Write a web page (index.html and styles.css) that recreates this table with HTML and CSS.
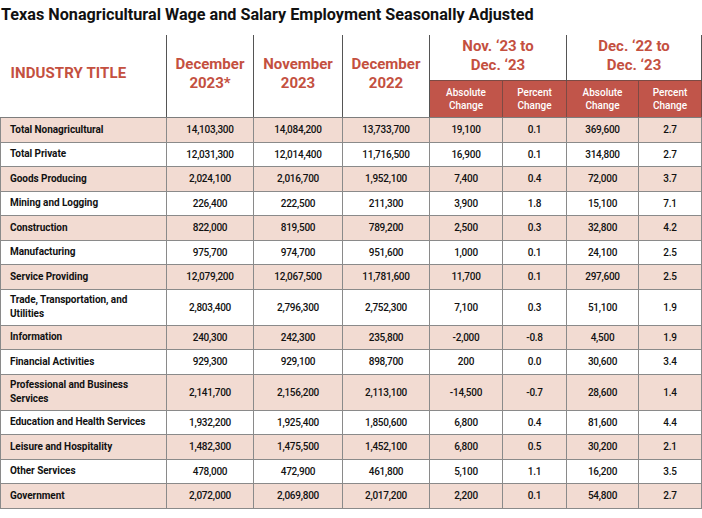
FILE: index.html
```html
<!DOCTYPE html>
<html>
<head>
<meta charset="utf-8">
<link rel="stylesheet" href="styles.css">
</head>
<body>
<h1 class="title">Texas Nonagricultural Wage and Salary Employment Seasonally Adjusted</h1>
<table class="emp">
<colgroup>
<col class="c-ind"><col class="c-a"><col class="c-b"><col class="c-c"><col class="c-d"><col class="c-e"><col class="c-f"><col class="c-g">
</colgroup>
<thead>
<tr class="top">
<th rowspan="2" class="ind">INDUSTRY TITLE</th>
<th rowspan="2" class="per">December<br>2023*</th>
<th rowspan="2" class="per">November<br>2023</th>
<th rowspan="2" class="per">December<br>2022</th>
<th colspan="2" class="grp">Nov. ‘23 to<br>Dec. ‘23</th>
<th colspan="2" class="grp">Dec. ‘22 to<br>Dec. ‘23</th>
</tr>
<tr class="sub">
<th>Absolute<br>Change</th><th>Percent<br>Change</th><th>Absolute<br>Change</th><th>Percent<br>Change</th>
</tr>
</thead>
<tbody>
<tr class="odd"><td>Total Nonagricultural</td><td>14,103,300</td><td>14,084,200</td><td>13,733,700</td><td>19,100</td><td>0.1</td><td>369,600</td><td>2.7</td></tr>
<tr><td>Total Private</td><td>12,031,300</td><td>12,014,400</td><td>11,716,500</td><td>16,900</td><td>0.1</td><td>314,800</td><td>2.7</td></tr>
<tr class="odd"><td>Goods Producing</td><td>2,024,100</td><td>2,016,700</td><td>1,952,100</td><td>7,400</td><td>0.4</td><td>72,000</td><td>3.7</td></tr>
<tr><td>Mining and Logging</td><td>226,400</td><td>222,500</td><td>211,300</td><td>3,900</td><td>1.8</td><td>15,100</td><td>7.1</td></tr>
<tr class="odd"><td>Construction</td><td>822,000</td><td>819,500</td><td>789,200</td><td>2,500</td><td>0.3</td><td>32,800</td><td>4.2</td></tr>
<tr><td>Manufacturing</td><td>975,700</td><td>974,700</td><td>951,600</td><td>1,000</td><td>0.1</td><td>24,100</td><td>2.5</td></tr>
<tr class="odd"><td>Service Providing</td><td>12,079,200</td><td>12,067,500</td><td>11,781,600</td><td>11,700</td><td>0.1</td><td>297,600</td><td>2.5</td></tr>
<tr class="tall"><td>Trade, Transportation, and<br>Utilities</td><td>2,803,400</td><td>2,796,300</td><td>2,752,300</td><td>7,100</td><td>0.3</td><td>51,100</td><td>1.9</td></tr>
<tr class="odd"><td>Information</td><td>240,300</td><td>242,300</td><td>235,800</td><td>-2,000</td><td>-0.8</td><td>4,500</td><td>1.9</td></tr>
<tr><td>Financial Activities</td><td>929,300</td><td>929,100</td><td>898,700</td><td>200</td><td>0.0</td><td>30,600</td><td>3.4</td></tr>
<tr class="odd tall"><td>Professional and Business<br>Services</td><td>2,141,700</td><td>2,156,200</td><td>2,113,100</td><td>-14,500</td><td>-0.7</td><td>28,600</td><td>1.4</td></tr>
<tr><td>Education and Health Services</td><td>1,932,200</td><td>1,925,400</td><td>1,850,600</td><td>6,800</td><td>0.4</td><td>81,600</td><td>4.4</td></tr>
<tr class="odd"><td>Leisure and Hospitality</td><td>1,482,300</td><td>1,475,500</td><td>1,452,100</td><td>6,800</td><td>0.5</td><td>30,200</td><td>2.1</td></tr>
<tr><td>Other Services</td><td>478,000</td><td>472,900</td><td>461,800</td><td>5,100</td><td>1.1</td><td>16,200</td><td>3.5</td></tr>
<tr class="odd"><td>Government</td><td>2,072,000</td><td>2,069,800</td><td>2,017,200</td><td>2,200</td><td>0.1</td><td>54,800</td><td>2.7</td></tr>
</tbody>
</table>
</body>
</html>
```

FILE: styles.css
```css
html, body {
  margin: 0;
  padding: 0;
  background: #ffffff;
}
body {
  font-family: Roboto, "Liberation Sans", sans-serif;
  color: #111111;
}
.title {
  margin: 0;
  padding: 5px 0 0 1px;
  height: 30px;
  box-sizing: border-box;
  font-size: 16.2px;
  font-weight: 700;
  letter-spacing: 0;
  line-height: 19px;
  color: #111111;
  white-space: nowrap;
}
.emp {
  border-collapse: collapse;
  table-layout: fixed;
  width: 701px;
  margin-top: 5px;
}
.c-ind { width: 166px; }
.c-a { width: 87px; }
.c-b { width: 89px; }
.c-c { width: 87px; }
.c-d { width: 73px; }
.c-e { width: 64px; }
.c-f { width: 72px; }
.c-g { width: 63px; }

.emp th {
  padding: 0;
  font-weight: 700;
  color: #c4503f;
  text-align: center;
}
.top th {
  height: 42px;
  border-left: 1px solid #555555;
  border-right: 1px solid #555555;
  border-bottom: 1px solid #7d7d7d;
  font-size: 15px;
  line-height: 19px;
}
.top th.ind {
  border-left: none;
  text-align: left;
  padding-left: 10px;
  padding-bottom: 5px;
  font-size: 15px;
  letter-spacing: 0.1px;
}
.top th.per {
  padding-bottom: 4px;
}
.top th.grp {
  border-bottom: none;
  padding-bottom: 3px;
}
.sub th {
  height: 36px;
  background: #c1554a;
  color: #ffffff;
  font-size: 10px;
  font-weight: 500;
  line-height: 13px;
  border: 1px solid #7d4a44;
  border-bottom: 1px solid #7d7d7d;
}
.emp td {
  height: 23.5px;
  padding: 0;
  border: 1px solid #8a8a8a;
  font-size: 10px;
  font-weight: 500;
  text-align: center;
  letter-spacing: -0.25px;
  color: #111111;
}
.emp td:first-child {
  text-align: left;
  padding-left: 9px;
  font-weight: 700;
  font-size: 10px;
  letter-spacing: -0.05px;
  line-height: 14px;
}
.emp tr.tall td {
  height: 35px;
}
.emp tr.odd td {
  background: #f2dbd2;
}
```
